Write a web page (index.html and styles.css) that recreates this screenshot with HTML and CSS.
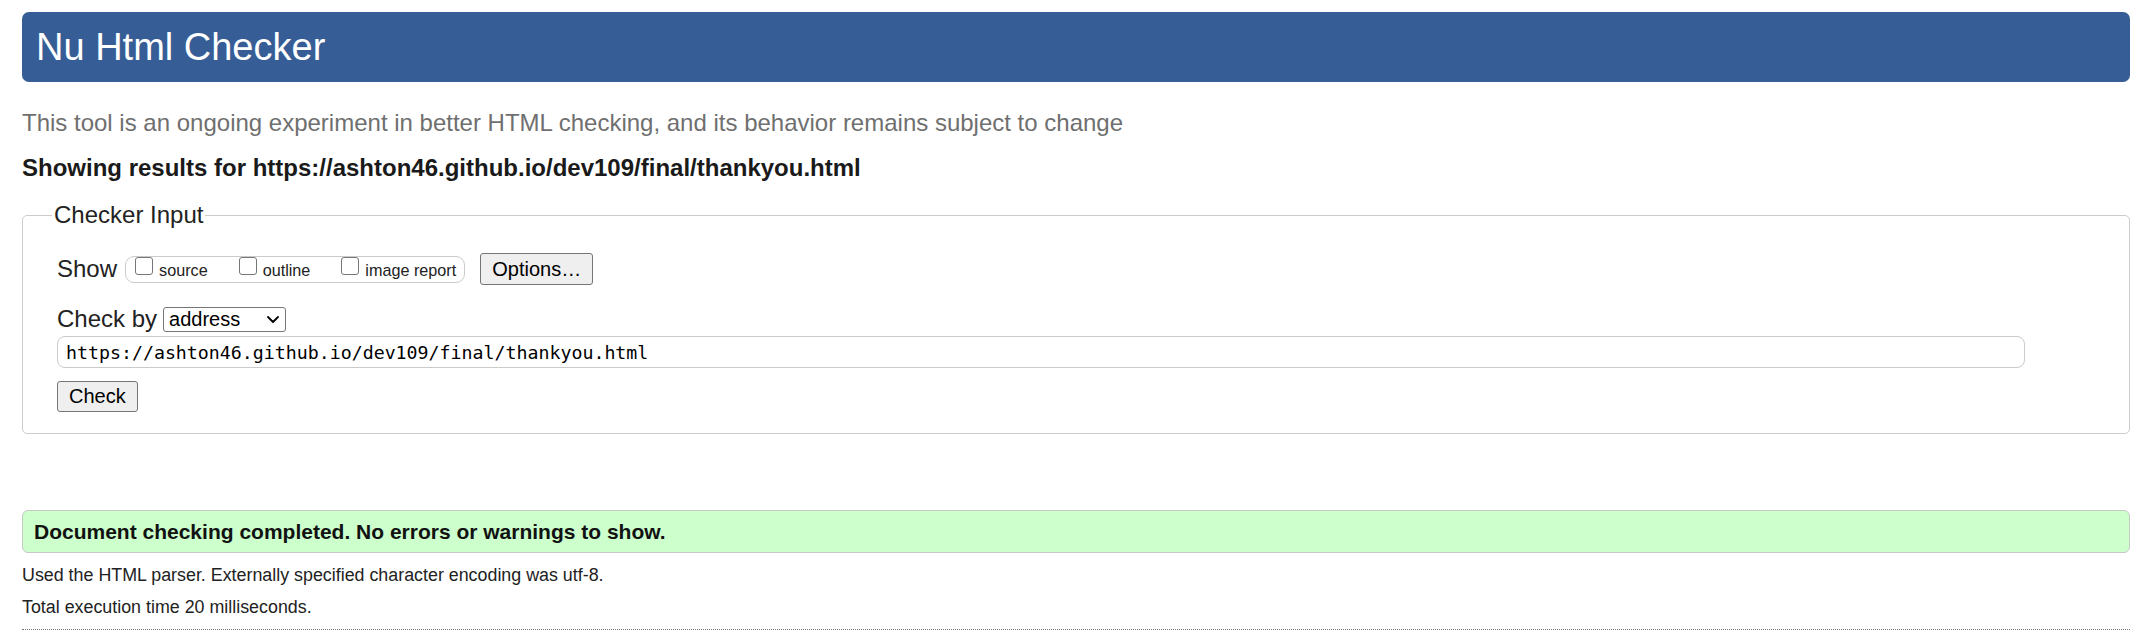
FILE: index.html
```html
<!DOCTYPE html>
<html lang="en">
<head>
<meta charset="utf-8">
<title>Nu Html Checker</title>
<link rel="stylesheet" href="styles.css">
</head>
<body>
<h1 class="title">Nu Html Checker</h1>
<p class="intro">This tool is an ongoing experiment in better HTML checking, and its behavior remains subject to change</p>
<p class="showing">Showing results for https://ashton46.github.io/dev109/final/thankyou.html</p>
<form class="checker">
  <fieldset class="input-set">
    <legend class="legend">Checker Input</legend>
    <div class="row row-show">
      <span class="label">Show</span>
      <span class="group">
        <label class="opt"><input type="checkbox" class="cb"><span class="opt-text">source</span></label>
        <label class="opt"><input type="checkbox" class="cb"><span class="opt-text">outline</span></label>
        <label class="opt"><input type="checkbox" class="cb"><span class="opt-text">image report</span></label>
      </span>
      <button type="button" class="btn btn-options">Options…</button>
    </div>
    <div class="row row-by">
      <span class="label">Check by</span>
      <span class="select-wrap">
        <select class="select"><option>address</option></select>
        <svg class="chev" viewBox="0 0 12 7" aria-hidden="true"><path d="M1 1 L6 6 L11 1" fill="none" stroke="#000" stroke-width="1.8" stroke-linecap="round" stroke-linejoin="round"/></svg>
      </span>
    </div>
    <div class="row row-url">
      <input class="url" type="url" value="https://ashton46.github.io/dev109/final/thankyou.html">
    </div>
    <div class="row row-submit">
      <button type="button" class="btn">Check</button>
    </div>
  </fieldset>
</form>
<p class="success">Document checking completed. No errors or warnings to show.</p>
<p class="details">Used the HTML parser. Externally specified character encoding was utf-8.</p>
<p class="details">Total execution time 20 milliseconds.</p>
<hr class="rule">
</body>
</html>
```
FILE: styles.css
```css
html {
  background: #fff;
}

body {
  margin: 0;
  padding: 12px 3px 0 22px;
  font-family: "Liberation Sans", Arial, sans-serif;
  color: #222;
  background: #fff;
}

.title {
  margin: 0;
  padding: 13px 14px;
  background: #365d95;
  color: #fff;
  font-size: 38px;
  font-weight: normal;
  line-height: 44px;
  border-radius: 7px;
}

.intro {
  margin: 27px 0 0;
  font-size: 24px;
  line-height: 28px;
  color: #6f6f6f;
}

.showing {
  margin: 17px 0 0;
  font-size: 24px;
  line-height: 28px;
  font-weight: bold;
  color: #1a1a1a;
}

.checker {
  margin: 19px 0 0;
}

.input-set {
  margin: 0;
  min-width: 0;
  border: 1px solid #cbcbcb;
  border-radius: 5px;
  padding: 24px 34px 21px 34px;
}

.legend {
  padding: 0 2px;
  margin-left: -5px;
  font-size: 24px;
  line-height: 28px;
  color: #222;
}

.row {
  display: flex;
  align-items: center;
}

.row-by {
  margin-top: 20px;
}

.row-url {
  margin-top: 3px;
}

.row-submit {
  margin-top: 13px;
}

.label {
  font-size: 24px;
  line-height: 28px;
}

.group {
  display: flex;
  align-items: flex-start;
  gap: 31px;
  height: 27px;
  box-sizing: border-box;
  margin-left: 8px;
  padding: 0 8px 0 9px;
  border: 1px solid #cbcbcb;
  border-radius: 9px;
}

.opt {
  display: flex;
  align-items: flex-start;
  gap: 6px;
}

.cb {
  appearance: none;
  -webkit-appearance: none;
  margin: 0.5px 0 0;
  width: 18px;
  height: 18px;
  box-sizing: border-box;
  border: 1.5px solid #767676;
  border-radius: 3px;
  background: #fff;
}

.opt-text {
  margin-top: 3px;
  font-size: 16.2px;
  line-height: 20px;
  color: #222;
}

.btn {
  height: 31px;
  box-sizing: border-box;
  padding: 0 11px;
  border: 1px solid #767676;
  border-radius: 3px;
  background: #efefef;
  color: #000;
  font-family: "Liberation Sans", Arial, sans-serif;
  font-size: 20px;
}

.btn-options {
  margin-left: 15px;
  height: 32px;
}

.select-wrap {
  position: relative;
  margin-left: 6px;
  display: flex;
}

.select {
  appearance: none;
  -webkit-appearance: none;
  width: 123px;
  height: 25px;
  box-sizing: border-box;
  margin: 0;
  padding: 0 0 0 5px;
  border: 1px solid #767676;
  border-radius: 3px;
  background: #fff;
  color: #000;
  font-family: "Liberation Sans", Arial, sans-serif;
  font-size: 20px;
}

.chev {
  position: absolute;
  right: 7px;
  top: 9px;
  width: 12px;
  height: 7px;
  pointer-events: none;
}

.url {
  width: calc(100% - 70px);
  height: 32px;
  box-sizing: border-box;
  margin: 0;
  padding: 0 8px;
  border: 1px solid #cbcbcb;
  border-radius: 8px;
  background: #fff;
  color: #000;
  font-family: "DejaVu Sans Mono", "Liberation Mono", monospace;
  font-size: 18.25px;
}

.success {
  margin: 76px 0 0;
  padding: 9px 11px 8px;
  background: #ccffcc;
  border: 1px solid #c8c8c8;
  border-radius: 6px;
  font-size: 21px;
  line-height: 24px;
  font-weight: bold;
  color: #111;
}

.details {
  margin: 12px 0 0;
  font-size: 17.85px;
  line-height: 20px;
  color: #222;
}

.details + .details {
  margin-top: 12px;
}

.rule {
  margin: 11.5px 0 0;
  height: 0;
  border: 0;
  border-top: 1px dotted #777;
}
```
